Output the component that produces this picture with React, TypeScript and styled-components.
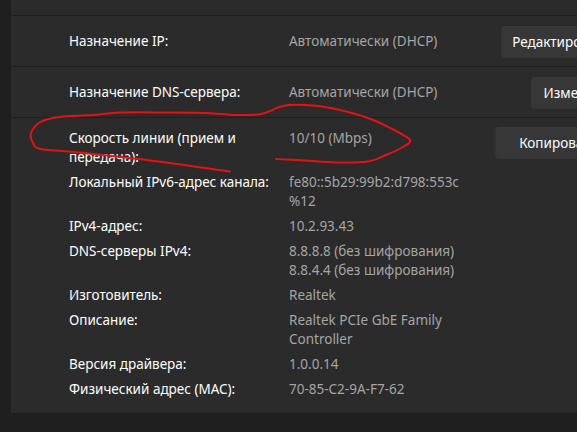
import React from "react";
import styled, { createGlobalStyle } from "styled-components";

const Global = createGlobalStyle`
  html, body {
    margin: 0;
    padding: 0;
    background: #1f1f1f;
    overflow: hidden;
  }
  #root {
    width: 577px;
    height: 432px;
  }
`;

const Page = styled.div`
  position: relative;
  width: 577px;
  height: 432px;
  overflow: hidden;
  background: #1f1f1f;
  padding-left: 11px;
  box-sizing: border-box;
  font-family: "Noto Sans", "Segoe UI", sans-serif;
  font-size: 13.5px;
  color: #ffffff;
`;

const Stack = styled.div`
  width: 626px;
  display: flex;
  flex-direction: column;
  gap: 1px;
`;

const Section = styled.div<{ $h?: number }>`
  background: #2b2b2b;
  box-sizing: border-box;
  ${(p) => (p.$h ? `height: ${p.$h}px;` : "")}
`;

const SettingRow = styled(Section)`
  display: flex;
  align-items: center;
  padding: 1px 16px 0 58px;
`;

const Label = styled.div`
  width: 220px;
  flex: none;
  line-height: 19px;
  color: #ffffff;
`;

const Value = styled.div`
  flex: 1;
  line-height: 19px;
  color: #a5a5a5;
`;

const Button = styled.button<{ $w: number }>`
  flex: none;
  width: ${(p) => p.$w}px;
  height: 32px;
  box-sizing: border-box;
  border-radius: 4px;
  border: 1px solid #353535;
  border-top-color: #3a3a3a;
  background: #373737;
  color: #ffffff;
  font: inherit;
  font-size: 13.5px;
  white-space: nowrap;
  overflow: hidden;
  padding: 0 10px;
`;

const Details = styled(Section)`
  display: flex;
  align-items: flex-start;
  padding: 11px 16px 14px 58px;
`;

const Grid = styled.div`
  flex: 1;
  display: grid;
  grid-template-columns: 220px 1fr;
  row-gap: 6px;
  line-height: 19px;
`;

const Key = styled.div`
  color: #ffffff;
`;

const Val = styled.div`
  color: #a5a5a5;
`;

const TopButton = styled(Button)`
  margin-top: -2px;
`;

const Ink = styled.svg`
  position: absolute;
  left: 0;
  top: 0;
  pointer-events: none;
`;

const properties: { key: string[]; value: string[] }[] = [
  { key: ["Скорость линии (прием и", "передача):"], value: ["10/10 (Mbps)"] },
  { key: ["Локальный IPv6-адрес канала:"], value: ["fe80::5b29:99b2:d798:553c", "%12"] },
  { key: ["IPv4-адрес:"], value: ["10.2.93.43"] },
  { key: ["DNS-серверы IPv4:"], value: ["8.8.8.8 (без шифрования)", "8.8.4.4 (без шифрования)"] },
  { key: ["Изготовитель:"], value: ["Realtek"] },
  { key: ["Описание:"], value: ["Realtek PCIe GbE Family", "Controller"] },
  { key: ["Версия драйвера:"], value: ["1.0.0.14"] },
  { key: ["Физический адрес (MAC):"], value: ["70-85-C2-9A-F7-62"] },
];

const Lines = ({ lines }: { lines: string[] }) => (
  <>
    {lines.map((l, i) => (
      <div key={i}>{l}</div>
    ))}
  </>
);

// Hand-drawn marker loop around the link speed entry
const loop: [number, number][] = [
  [276, 159], [312, 161], [339, 162.5], [368, 161.5], [386, 155], [403, 147],
  [410, 140], [394, 130], [368, 118], [331, 108], [305, 105], [283, 106],
  [261, 114], [235, 115], [206, 113], [165, 112.5], [121, 112.5], [92, 115],
  [59, 117], [40.5, 122], [31, 133], [33, 143], [40.5, 149], [74, 152],
  [147, 160], [230, 171.5],
];

function smoothPath(pts: [number, number][]) {
  let d = `M ${pts[0][0]} ${pts[0][1]}`;
  for (let i = 0; i < pts.length - 1; i++) {
    const p0 = pts[i - 1] || pts[i];
    const p1 = pts[i];
    const p2 = pts[i + 1];
    const p3 = pts[i + 2] || p2;
    const c1x = p1[0] + (p2[0] - p0[0]) / 6;
    const c1y = p1[1] + (p2[1] - p0[1]) / 6;
    const c2x = p2[0] - (p3[0] - p1[0]) / 6;
    const c2y = p2[1] - (p3[1] - p1[1]) / 6;
    d += ` C ${c1x.toFixed(1)} ${c1y.toFixed(1)}, ${c2x.toFixed(1)} ${c2y.toFixed(1)}, ${p2[0]} ${p2[1]}`;
  }
  return d;
}

export default function App() {
  return (
    <>
      <Global />
      <Page>
        <Stack>
          <Section $h={15} />
          <SettingRow $h={50}>
            <Label>Назначение IP:</Label>
            <Value>Автоматически (DHCP)</Value>
            <Button $w={120}>Редактировать</Button>
          </SettingRow>
          <SettingRow $h={50}>
            <Label>Назначение DNS-сервера:</Label>
            <Value>Автоматически (DHCP)</Value>
            <Button $w={90}>Изменить</Button>
          </SettingRow>
          <Details>
            <Grid>
              {properties.map((p, i) => (
                <React.Fragment key={i}>
                  <Key>
                    <Lines lines={p.key} />
                  </Key>
                  <Val>
                    <Lines lines={p.value} />
                  </Val>
                </React.Fragment>
              ))}
            </Grid>
            <TopButton $w={126}>Копировать</TopButton>
          </Details>
        </Stack>
        <Ink width={577} height={432} viewBox="0 0 577 432">
          <path
            d={smoothPath(loop)}
            fill="none"
            stroke="#e01414"
            strokeWidth={2}
            strokeLinecap="round"
            strokeLinejoin="round"
          />
        </Ink>
      </Page>
    </>
  );
}
